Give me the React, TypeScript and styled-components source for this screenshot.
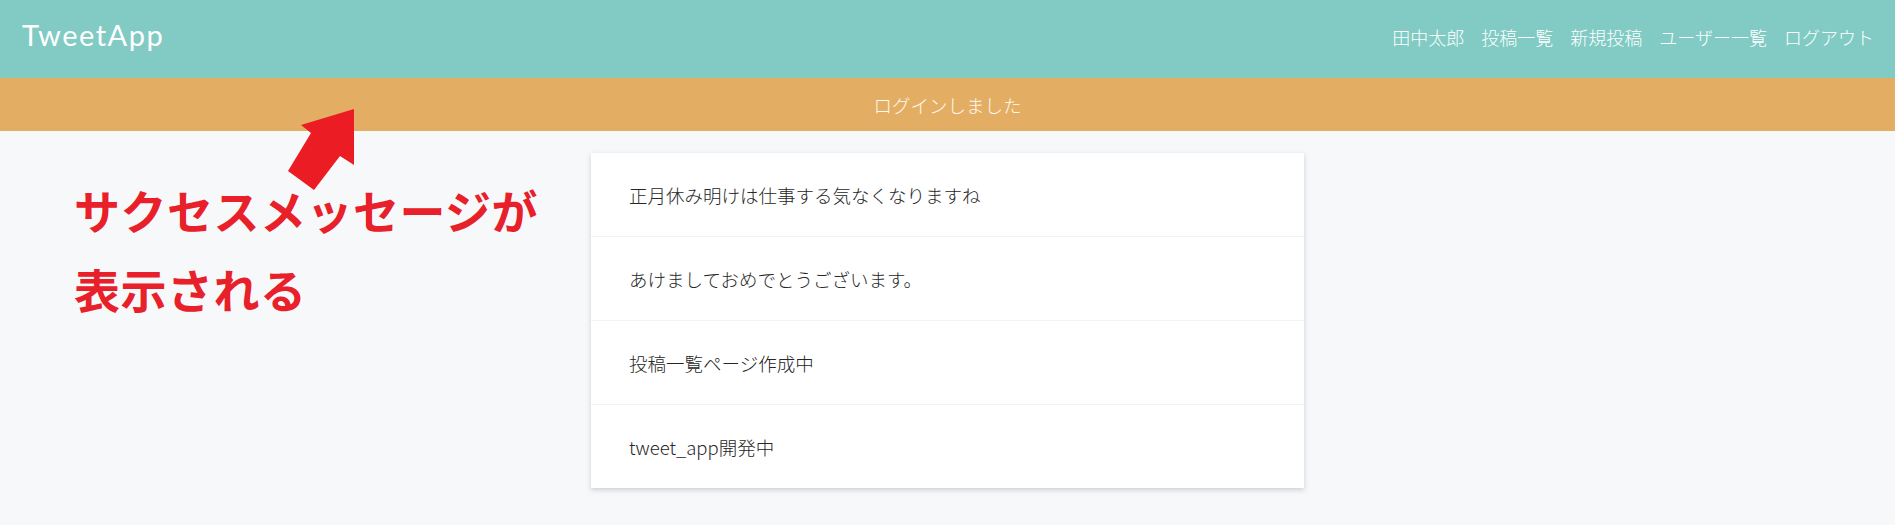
import React from "react";
import styled, { createGlobalStyle } from "styled-components";

const GlobalStyle = createGlobalStyle`
  html, body {
    margin: 0;
    padding: 0;
    background: #f7f8fa;
  }
  body {
    font-family: "Noto Sans CJK JP", "Noto Sans", sans-serif;
    color: #3a3a3a;
  }
  * { box-sizing: border-box; }
`;

const Page = styled.div`
  position: relative;
  width: 1895px;
  height: 525px;
  overflow: hidden;
  background: #f7f8fa;
`;

const Header = styled.header`
  height: 78px;
  background: #81cbc4;
  display: flex;
  align-items: center;
  justify-content: space-between;
  padding: 0 21px 0 22px;
`;

const Logo = styled.a`
  font-family: Lato, "Open Sans", sans-serif;
  font-size: 29px;
  line-height: 1;
  color: #ffffff;
  text-decoration: none;
  letter-spacing: 1.5px;
  margin-top: -10px;
`;

const Nav = styled.nav`
  display: flex;
  align-items: center;
  gap: 17px;
  margin-top: -4px;
`;

const NavLink = styled.a`
  font-size: 18px;
  font-weight: 300;
  line-height: 1;
  color: #ffffff;
  text-decoration: none;
`;

const Flash = styled.div`
  height: 53px;
  background: #e3ae63;
  color: #fffaf0;
  font-size: 18.5px;
  font-weight: 300;
  display: flex;
  align-items: center;
  justify-content: center;
`;

const Main = styled.main`
  display: flex;
  justify-content: center;
  padding-top: 22px;
`;

const PostList = styled.ul`
  list-style: none;
  margin: 0;
  padding: 0;
  width: 713px;
  background: #ffffff;
  box-shadow: 0 2px 5px rgba(120, 130, 150, 0.35);
`;

const PostItem = styled.li`
  padding: 28px 38px 27px;
  font-size: 18.5px;
  font-weight: 300;
  line-height: 28px;
  color: #262626;
  border-bottom: 1px solid #f2f3f5;
  &:last-child {
    border-bottom: none;
  }
`;

const Annotation = styled.div`
  position: absolute;
  left: 74px;
  top: 170px;
  font-family: "Noto Sans CJK JP", sans-serif;
  font-weight: 700;
  font-size: 46px;
  line-height: 79px;
  color: #e8202a;
  letter-spacing: 0.5px;
`;

const ArrowSvg = styled.svg`
  position: absolute;
  left: 280px;
  top: 100px;
`;

const posts = [
  "正月休み明けは仕事する気なくなりますね",
  "あけましておめでとうございます。",
  "投稿一覧ページ作成中",
  "tweet_app開発中",
];

const navItems = ["田中太郎", "投稿一覧", "新規投稿", "ユーザー一覧", "ログアウト"];

export default function App() {
  return (
    <>
      <GlobalStyle />
      <Page>
        <Header>
          <Logo href="#">TweetApp</Logo>
          <Nav>
            {navItems.map((n) => (
              <NavLink key={n} href="#">
                {n}
              </NavLink>
            ))}
          </Nav>
        </Header>
        <Flash>ログインしました</Flash>
        <Main>
          <PostList>
            {posts.map((p) => (
              <PostItem key={p}>{p}</PostItem>
            ))}
          </PostList>
        </Main>
        <ArrowSvg width="90" height="100" viewBox="280 100 90 100">
          <polygon
            points="354,109 301,125 311,133 288,171 314,190 340,156 354,165"
            fill="#ec1c24"
          />
        </ArrowSvg>
        <Annotation>
          サクセスメッセージが
          <br />
          表示される
        </Annotation>
      </Page>
    </>
  );
}
